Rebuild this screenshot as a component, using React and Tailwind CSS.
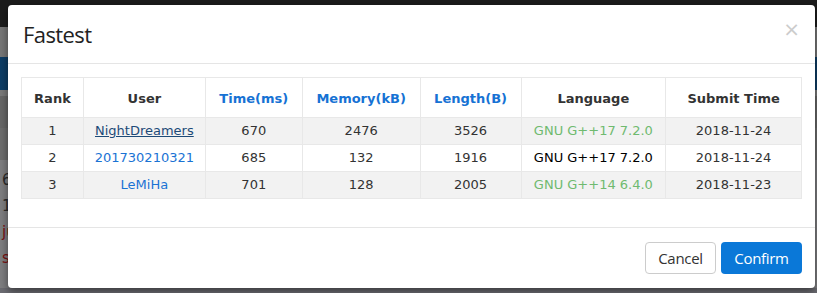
const cols = [
  { key: 'rank', label: 'Rank', w: 'w-[62px]', blue: false },
  { key: 'user', label: 'User', w: 'w-[122px]', blue: false },
  { key: 'time', label: 'Time(ms)', w: 'w-[97px]', blue: true },
  { key: 'mem', label: 'Memory(kB)', w: 'w-[118px]', blue: true },
  { key: 'len', label: 'Length(B)', w: 'w-[101px]', blue: true },
  { key: 'lang', label: 'Language', w: 'w-[145px]', blue: false },
  { key: 'date', label: 'Submit Time', w: 'w-[136px]', blue: false },
];

const rows = [
  { rank: 1, user: 'NightDreamers', userStyle: 'visited', time: 670, mem: 2476, len: 3526, lang: 'GNU G++17 7.2.0', langOk: true, date: '2018-11-24' },
  { rank: 2, user: '201730210321', userStyle: 'link', time: 685, mem: 132, len: 1916, lang: 'GNU G++17 7.2.0', langOk: false, date: '2018-11-24' },
  { rank: 3, user: 'LeMiHa', userStyle: 'link', time: 701, mem: 128, len: 2005, lang: 'GNU G++14 6.4.0', langOk: true, date: '2018-11-23' },
];

const Backdrop = () => (
  <div className="flex flex-col w-full h-full">
    <div className="h-[27px] bg-[#1c1c1c]" />
    <div className="h-[30px] bg-[#777777]" />
    <div className="h-[33px] bg-[#0d3d66]" />
    <div className="h-[6px] bg-[#7a7a7a]" />
    <div className="h-[32px] bg-[#686868]" />
    <div className="h-[32px] bg-[#6e6e6e]" />
    <div className="flex-1 bg-[#7e7e80] pl-[2px] pt-[7px] text-[15px] leading-[26px] text-[#2a2a2a]" style={{ fontFamily: '"DejaVu Sans", sans-serif' }}>
      <div>6</div>
      <div>1</div>
      <div className="text-[#7a1010]">ju</div>
      <div className="text-[#7a1010]">s</div>
    </div>
    <div className="h-[5px] bg-[#6c6c72]" />
  </div>
);

const Cell = ({ col, row }) => {
  if (col.key === 'user') {
    return row.userStyle === 'visited' ? (
      <span className="text-[#1d4a78] underline">{row.user}</span>
    ) : (
      <span className="text-[#1a73d4]">{row.user}</span>
    );
  }
  if (col.key === 'lang') {
    return <span className={row.langOk ? 'text-[#6fba6f]' : 'text-black'}>{row.lang}</span>;
  }
  return <span>{row[col.key]}</span>;
};

export default function App() {
  return (
    <div className="relative w-[817px] h-[293px] overflow-hidden">
      <Backdrop />
      <div className="absolute left-[8px] top-[5px] w-[807px] h-[283px] bg-white rounded-[4px] flex flex-col shadow-[0_3px_9px_rgba(0,0,0,0.5)]">
        <div className="h-[59px] border-b border-[#e5e5e5] flex items-center justify-between pl-[15px] pr-[15px]">
          <h4 className="text-[22px] tracking-[-0.6px] text-[#222]" style={{ fontFamily: '"Open Sans", sans-serif' }}>Fastest</h4>
          <span className="text-[20px] leading-none text-[#cccccc] mb-[10px]" style={{ fontFamily: '"DejaVu Sans", sans-serif' }}>×</span>
        </div>
        <div className="pt-[13px] px-[13px] pb-[28px]" style={{ fontFamily: '"DejaVu Sans", Verdana, sans-serif' }}>
          <table className="w-[781px] border-collapse text-[13px] text-[#333]">
            <thead>
              <tr className="h-[40px] bg-white">
                {cols.map((c) => (
                  <th key={c.key} className={`${c.w} border border-[#e8e8e8] font-bold text-center pt-[2px] ${c.blue ? 'text-[#1672d4]' : 'text-[#333]'}`}>
                    {c.label}
                  </th>
                ))}
              </tr>
            </thead>
            <tbody>
              {rows.map((r, i) => (
                <tr key={r.rank} className={`h-[27px] ${i % 2 === 0 ? 'bg-[#f2f2f2]' : 'bg-white'}`}>
                  {cols.map((c) => (
                    <td key={c.key} className="border border-[#e8e8e8] text-center p-0">
                      <Cell col={c} row={r} />
                    </td>
                  ))}
                </tr>
              ))}
            </tbody>
          </table>
        </div>
        <div className="border-t border-[#e5e5e5] flex justify-end gap-[5px] pt-[14px] pr-[13px]" style={{ fontFamily: '"Open Sans", sans-serif' }}>
          <button className="w-[71px] h-[32px] border border-[#cccccc] rounded-[4px] bg-white text-[15px] tracking-[-0.3px] text-[#333]">Cancel</button>
          <button className="w-[81px] h-[32px] rounded-[4px] bg-[#0a78d8] text-[15px] tracking-[-0.3px] text-white">Confirm</button>
        </div>
      </div>
    </div>
  );
}
